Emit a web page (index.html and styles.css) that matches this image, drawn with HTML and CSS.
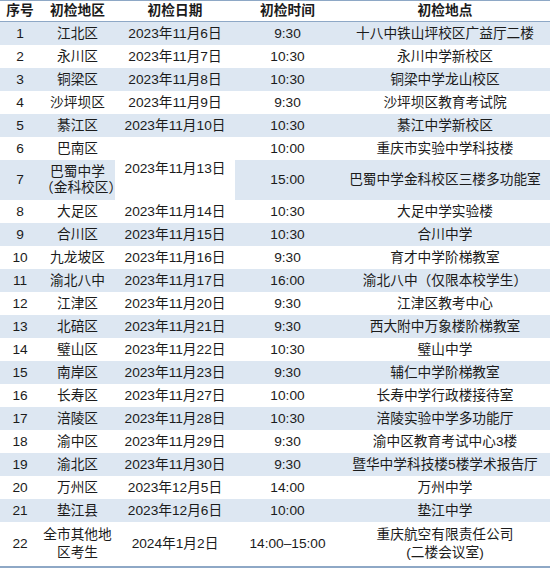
FILE: index.html
```html
<!DOCTYPE html>
<html lang="zh">
<head>
<meta charset="utf-8">
<link rel="stylesheet" href="styles.css">
</head>
<body>
<table class="sched">
  <colgroup>
    <col class="c1"><col class="c2"><col class="c3"><col class="c4"><col class="c5">
  </colgroup>
  <thead>
    <tr><th>序号</th><th>初检地区</th><th>初检日期</th><th>初检时间</th><th>初检地点</th></tr>
  </thead>
  <tbody>
    <tr class="alt"><td>1</td><td>江北区</td><td>2023年11月6日</td><td>9:30</td><td>十八中铁山坪校区广益厅二楼</td></tr>
    <tr><td>2</td><td>永川区</td><td>2023年11月7日</td><td>10:30</td><td>永川中学新校区</td></tr>
    <tr class="alt"><td>3</td><td>铜梁区</td><td>2023年11月8日</td><td>10:30</td><td>铜梁中学龙山校区</td></tr>
    <tr><td>4</td><td>沙坪坝区</td><td>2023年11月9日</td><td>9:30</td><td>沙坪坝区教育考试院</td></tr>
    <tr class="alt"><td>5</td><td>綦江区</td><td>2023年11月10日</td><td>10:30</td><td>綦江中学新校区</td></tr>
    <tr><td>6</td><td>巴南区</td><td rowspan="2" class="merged">2023年11月13日</td><td>10:00</td><td>重庆市实验中学科技楼</td></tr>
    <tr class="alt tall"><td>7</td><td>巴蜀中学<br>（金科校区）</td><td>15:00</td><td>巴蜀中学金科校区三楼多功能室</td></tr>
    <tr><td>8</td><td>大足区</td><td>2023年11月14日</td><td>10:30</td><td>大足中学实验楼</td></tr>
    <tr class="alt"><td>9</td><td>合川区</td><td>2023年11月15日</td><td>10:30</td><td>合川中学</td></tr>
    <tr><td>10</td><td>九龙坡区</td><td>2023年11月16日</td><td>9:30</td><td>育才中学阶梯教室</td></tr>
    <tr class="alt"><td>11</td><td>渝北八中</td><td>2023年11月17日</td><td>16:00</td><td>渝北八中（仅限本校学生）</td></tr>
    <tr><td>12</td><td>江津区</td><td>2023年11月20日</td><td>9:30</td><td>江津区教考中心</td></tr>
    <tr class="alt"><td>13</td><td>北碚区</td><td>2023年11月21日</td><td>9:30</td><td>西大附中万象楼阶梯教室</td></tr>
    <tr><td>14</td><td>璧山区</td><td>2023年11月22日</td><td>10:30</td><td>璧山中学</td></tr>
    <tr class="alt"><td>15</td><td>南岸区</td><td>2023年11月23日</td><td>9:30</td><td>辅仁中学阶梯教室</td></tr>
    <tr><td>16</td><td>长寿区</td><td>2023年11月27日</td><td>10:00</td><td>长寿中学行政楼接待室</td></tr>
    <tr class="alt"><td>17</td><td>涪陵区</td><td>2023年11月28日</td><td>10:30</td><td>涪陵实验中学多功能厅</td></tr>
    <tr><td>18</td><td>渝中区</td><td>2023年11月29日</td><td>9:30</td><td>渝中区教育考试中心3楼</td></tr>
    <tr class="alt"><td>19</td><td>渝北区</td><td>2023年11月30日</td><td>9:30</td><td>暨华中学科技楼5楼学术报告厅</td></tr>
    <tr><td>20</td><td>万州区</td><td>2023年12月5日</td><td>14:00</td><td>万州中学</td></tr>
    <tr class="alt"><td>21</td><td>垫江县</td><td>2023年12月6日</td><td>10:00</td><td>垫江中学</td></tr>
    <tr class="last"><td>22</td><td>全市其他地<br>区考生</td><td>2024年1月2日</td><td>14:00–15:00</td><td>重庆航空有限责任公司<br>(二楼会议室)</td></tr>
  </tbody>
</table>
</body>
</html>
```

FILE: styles.css
```css
html, body {
  margin: 0;
  padding: 0;
  background: #ffffff;
}

.sched {
  width: 550px;
  table-layout: fixed;
  border-collapse: collapse;
  font-family: "Liberation Sans", "Noto Sans CJK SC", sans-serif;
  font-size: 13.7px;
  color: #1b1b1b;
  border-top: 1px solid #8ea8c6;
  border-bottom: 2px solid #8ea8c6;
}

.c1 { width: 40px; }
.c2 { width: 75px; }
.c3 { width: 120px; }
.c4 { width: 105px; }
.c5 { width: 210px; }

.sched th {
  font-weight: bold;
  height: 20px;
  line-height: 20px;
  padding: 0;
  text-align: center;
  border-bottom: 1px solid #8ea8c6;
}

.sched td {
  text-align: center;
  vertical-align: middle;
  padding: 3px 0;
  line-height: 17px;
  height: 17px;
  white-space: nowrap;
}

.sched tr.alt td {
  background: #dde7f2;
}

.sched td.merged {
  background: #ffffff;
}

.sched tr.tall td {
  line-height: 16px;
  padding: 4px 0;
}

.sched tr.last td {
  line-height: 17.5px;
  padding: 4px 0 5px;
}
```
